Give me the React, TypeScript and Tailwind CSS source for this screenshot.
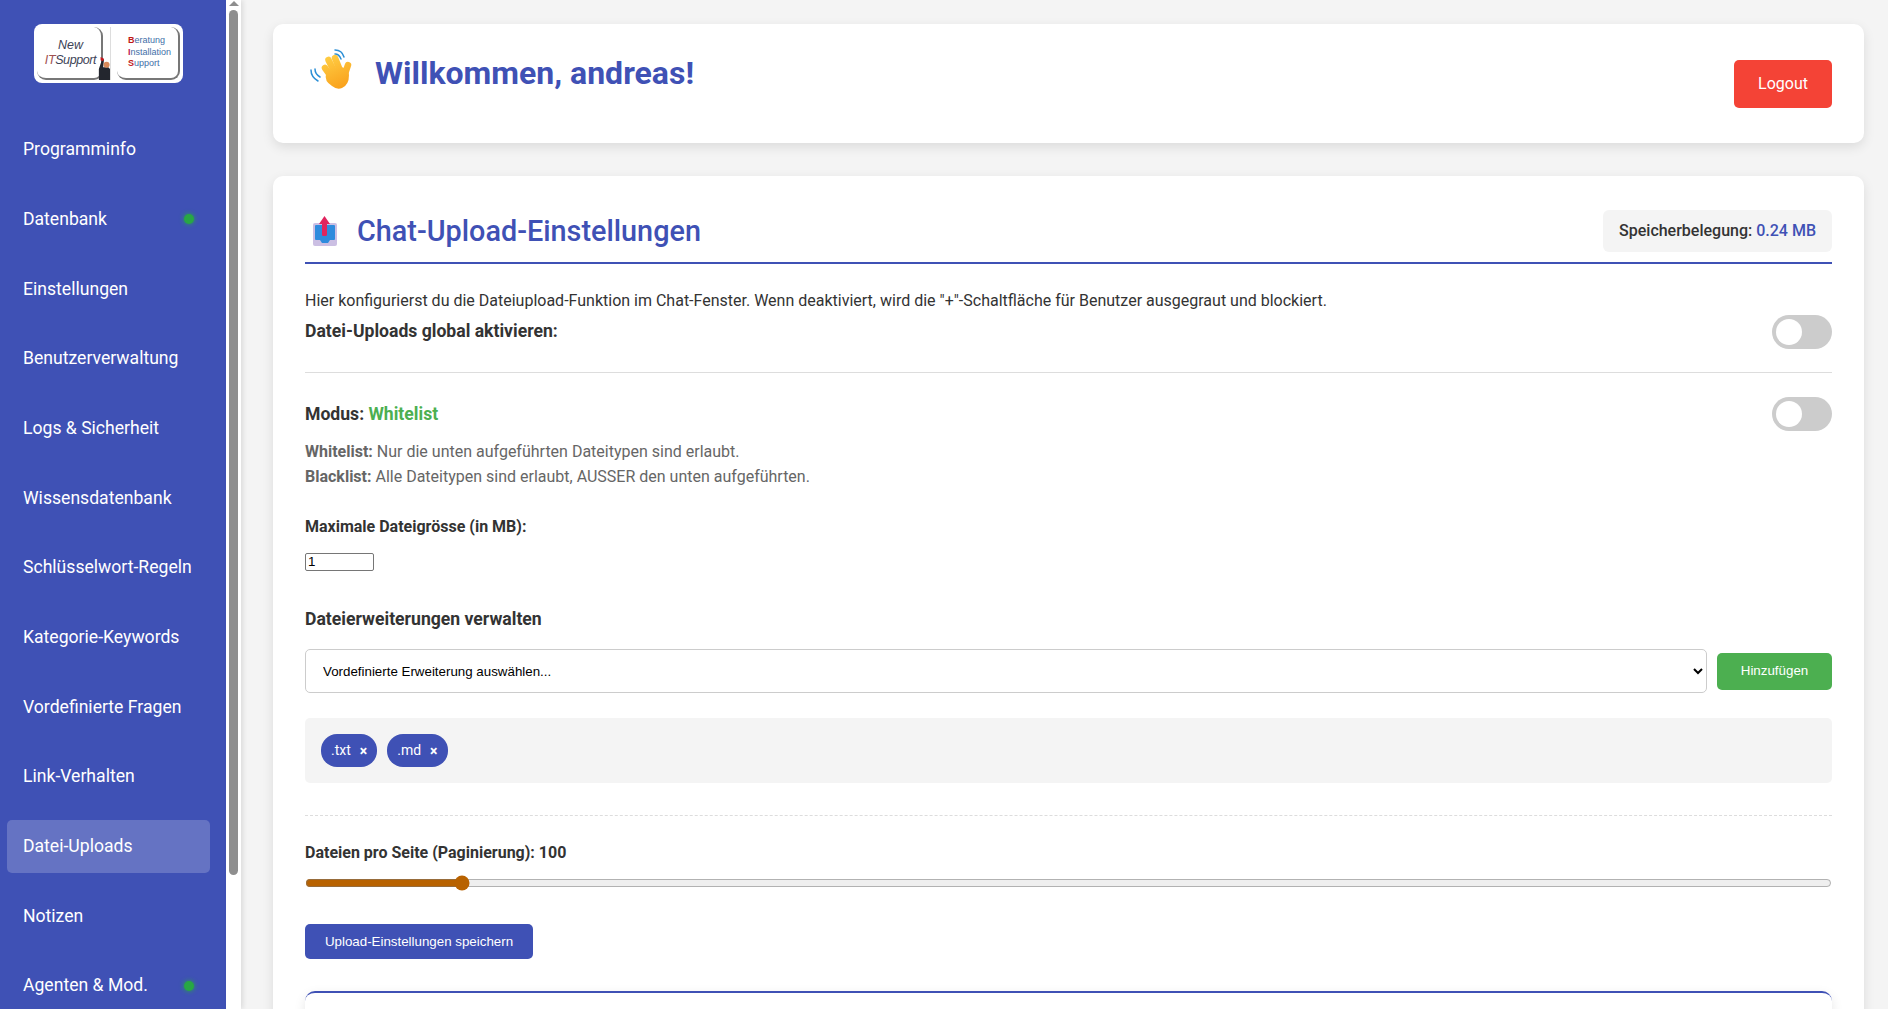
import React from 'react';

const menu = [
  { label: 'Programminfo' },
  { label: 'Datenbank', dot: true },
  { label: 'Einstellungen' },
  { label: 'Benutzerverwaltung' },
  { label: 'Logs & Sicherheit' },
  { label: 'Wissensdatenbank' },
  { label: 'Schlüsselwort-Regeln' },
  { label: 'Kategorie-Keywords' },
  { label: 'Vordefinierte Fragen' },
  { label: 'Link-Verhalten' },
  { label: 'Datei-Uploads', active: true },
  { label: 'Notizen' },
  { label: 'Agenten & Mod.', dot: true },
];

const Logo = () => (
  <div className="flex h-[59px] w-[149px] items-stretch overflow-hidden rounded-[8px] bg-white p-[3px] ml-[27px] font-['Liberation_Sans',sans-serif]">
    <div className="flex w-[66px] shrink-0 flex-col items-center justify-center rounded-[9px] border-r-2 border-b-2 border-[#777] pl-[3px] text-[12.5px] italic leading-[15px] text-[#3d4356]">
      <span>New</span>
      <span className="tracking-[-0.4px]">
        <span className="text-[#a05050]">IT</span>Support
      </span>
    </div>
    <svg viewBox="0 0 14 27" className="relative -ml-[5px] mt-[27px] h-[29px] w-[12px] shrink-0">
      <path d="M1 27 L1 14 L5 2 L7 3 L6 12 L12 12 L14 14 L14 27 Z" fill="#23262e" />
      <circle cx="10" cy="9" r="3.5" fill="#d98a5a" />
      <path d="M3 0 L7 2 L6 5 L3 4 Z" fill="#c6161c" />
    </svg>
    <div className="flex flex-1 border-l border-[#ddd] pl-[6px]">
      <div className="flex flex-1 flex-col justify-center rounded-[9px] border-r-2 border-b-2 border-[#777] pl-[11px] text-[9px] leading-[11.5px] text-[#3f6fa8]">
        <span><span className="font-bold text-[#c01818]">B</span>eratung</span>
        <span><span className="font-bold text-[#c01850]">I</span>nstallation</span>
        <span><span className="font-bold text-[#c01818]">S</span>upport</span>
      </div>
    </div>
  </div>
);

const WaveIcon = () => (
  <svg viewBox="11 12 52 52" className="h-[52px] w-[52px] shrink-0">
    <defs>
      <linearGradient id="hand" gradientUnits="userSpaceOnUse" x1="32" y1="20" x2="48" y2="54">
        <stop offset="0" stopColor="#ffcf45" />
        <stop offset="1" stopColor="#f9a01b" />
      </linearGradient>
    </defs>
    <g fill="none" stroke="#2b8fd6" strokeWidth="1.5" strokeLinecap="round">
      <path d="M41 15 Q48 15 50 22" />
      <path d="M41 19 Q45 19 47 24" />
      <path d="M17 35 Q17 42 24 46" />
      <path d="M21 34 Q21 39 26 42" />
    </g>
    <g stroke="url(#hand)" strokeLinecap="round" fill="none">
      <path d="M31 33 L39 44" strokeWidth="6.5" />
      <path d="M34.5 25 L42 40" strokeWidth="6.5" />
      <path d="M41 23 L47 38" strokeWidth="6.5" />
      <path d="M54 30 L50 42" strokeWidth="6.5" />
    </g>
    <path d="M32 39 Q30 46 38 51 Q43 55 48 53 Q55 50 55 40 Q54 32 45 32 Q36 32 32 39 Z" fill="url(#hand)" />
  </svg>
);

const UploadIcon = () => (
  <svg viewBox="8 5 40 40" className="ml-[2px] h-[40px] w-[40px] shrink-0">
    <path d="M14 19 Q14 17 16 17 L36 17 Q38 17 38 19 L38 38 Q38 40 36 40 L16 40 Q14 40 14 38 Z" fill="#cbbfe3" />
    <rect x="16" y="19" width="20" height="15" rx="1" fill="#2e8bdd" />
    <path d="M21 34 L31 34 L29 37 L23 37 Z" fill="#2e8bdd" />
    <rect x="23" y="16" width="5" height="14" rx="1.5" fill="#e0245e" />
    <path d="M25.5 10 L31 18 L20 18 Z" fill="#e0245e" />
  </svg>
);

const Toggle = () => (
  <div className="flex h-[34px] w-[60px] shrink-0 items-center rounded-full bg-[#ccc] px-[4px]">
    <div className="h-[26px] w-[26px] rounded-full bg-white" />
  </div>
);

const Tag = ({ label }: { label: string }) => (
  <span className="flex h-[33px] items-center gap-[9px] rounded-[16px] bg-[#3f51b5] pl-[10px] pr-[10px] text-[14px] text-white">
    {label}
    <span className="text-[14px] font-bold leading-none">×</span>
  </span>
);

export default function App() {
  return (
    <div className="flex h-[1009px] overflow-hidden bg-[#f4f4f4] font-['Roboto',sans-serif] text-[#333]">
      <aside className="h-full w-[226px] shrink-0 overflow-hidden bg-[#3f51b5] pl-[7px] pr-[16px] pt-[24px]">
        <Logo />
        <nav className="mt-[40px] flex flex-col gap-[17px]">
          {menu.map((item) => (
            <a
              key={item.label}
              className={
                item.active
                  ? 'flex h-[52.7px] shrink-0 items-center justify-between rounded-[5px] bg-[#6573c3] pl-[16px] pr-[16px] text-[17.6px] text-white'
                  : 'flex h-[52.7px] shrink-0 items-center justify-between rounded-[5px] pl-[16px] pr-[16px] text-[17.6px] text-white'
              }
            >
              {item.label}
              {item.dot && <span className="h-[10px] w-[10px] rounded-full bg-[#28a745] shadow-[0_0_5px_#28a745]" />}
            </a>
          ))}
        </nav>
      </aside>

      <div className="relative flex h-full w-[15px] shrink-0 flex-col items-center bg-white shadow-[2px_0_5px_rgba(0,0,0,0.1)]">
        <div className="mt-[1px] h-0 w-0 border-x-[5px] border-b-[5px] border-x-transparent border-b-[#8e8e8e]" />
        <div className="mt-[4px] h-[865px] w-[9px] rounded-full bg-[#8e8e8e]" />
      </div>

      <main className="min-w-0 flex-1 pl-[32px] pr-[24px] pt-[24px]">
        <header className="flex h-[119px] items-center justify-between rounded-[10px] bg-white px-[32px] shadow-[0_4px_12px_rgba(0,0,0,0.1)]">
          <h1 className="mb-[22px] flex items-center gap-[18px] text-[32px] font-bold text-[#3f51b5]">
            <WaveIcon />
            Willkommen, andreas!
          </h1>
          <button className="h-[48px] w-[98px] rounded-[5px] bg-[#f44336] text-[16px] text-white">Logout</button>
        </header>

        <section className="mt-[33px] rounded-[10px] bg-white px-[32px] pt-[34px] shadow-[0_4px_12px_rgba(0,0,0,0.1)]">
          <div className="flex items-center justify-between border-b-2 border-[#3f51b5] pb-[10px]">
            <h2 className="flex items-center gap-[10px] text-[28.8px] font-medium leading-[34px] text-[#3f51b5]">
              <UploadIcon />
              Chat-Upload-Einstellungen
            </h2>
            <div className="flex h-[42px] items-center rounded-[6px] bg-[#f4f4f4] px-[16px] text-[16px] font-medium">
              Speicherbelegung:&nbsp;<span className="text-[#3f51b5]">0.24 MB</span>
            </div>
          </div>

          <p className="mt-[27px] text-[16px] leading-[20px]">
            Hier konfigurierst du die Dateiupload-Funktion im Chat-Fenster. Wenn deaktiviert, wird die "+"-Schaltfläche für Benutzer ausgegraut und blockiert.
          </p>

          <div className="mt-[4px] flex items-start justify-between border-b border-[#ddd] pb-[23px]">
            <strong className="mt-[3px] text-[17.6px] font-bold">Datei-Uploads global aktivieren:</strong>
            <Toggle />
          </div>

          <div className="mt-[24px] flex items-center justify-between">
            <strong className="text-[17.6px] font-bold">
              Modus: <span className="text-[#4caf50]">Whitelist</span>
            </strong>
            <Toggle />
          </div>

          <div className="mt-[8px] text-[16px] leading-[25px] text-[#666]">
            <p><b className="font-bold">Whitelist:</b> Nur die unten aufgeführten Dateitypen sind erlaubt.</p>
            <p><b className="font-bold">Blacklist:</b> Alle Dateitypen sind erlaubt, AUSSER den unten aufgeführten.</p>
          </div>

          <label className="mt-[28px] block text-[16px] font-bold leading-[20px]">Maximale Dateigrösse (in MB):</label>
          <input
            type="number"
            defaultValue={1}
            className="mt-[16px] block h-[18px] w-[69px] rounded-[2px] border border-[#767676] bg-white px-[2px] font-['Liberation_Sans',sans-serif] text-[13.33px] text-black"
          />

          <h3 className="mt-[37px] text-[17.6px] font-bold leading-[22px]">Dateierweiterungen verwalten</h3>

          <div className="mt-[19px] flex items-center gap-[10px]">
            <select
              defaultValue=""
              className="h-[44px] flex-1 rounded-[5px] border border-[#ccc] bg-white pl-[13px] font-['Liberation_Sans',sans-serif] text-[13.33px] text-black"
            >
              <option value="">Vordefinierte Erweiterung auswählen...</option>
            </select>
            <button className="h-[37px] w-[115px] rounded-[5px] bg-[#4caf50] font-['Liberation_Sans',sans-serif] text-[13.33px] text-white">
              Hinzufügen
            </button>
          </div>

          <div className="mt-[25px] flex h-[65px] items-center gap-[10px] rounded-[5px] bg-[#f4f4f4] px-[16px]">
            <Tag label=".txt" />
            <Tag label=".md" />
          </div>

          <div className="mt-[32px] border-t border-dashed border-[#ddd]" />

          <label className="mt-[27px] block text-[16px] font-bold leading-[20px]">Dateien pro Seite (Paginierung): 100</label>
          <input
            type="range"
            min={0}
            max={1013}
            defaultValue={100}
            className="mt-[12px] block h-[16px] w-full accent-[#b86200]"
          />

          <button className="mt-[33px] block h-[35px] w-[228px] rounded-[5px] bg-[#3f51b5] font-['Liberation_Sans',sans-serif] text-[13.33px] text-white">
            Upload-Einstellungen speichern
          </button>

          <div className="mt-[32px] h-[40px] rounded-t-[10px] border-t-2 border-[#3f51b5] shadow-[0_4px_12px_rgba(0,0,0,0.1)]" />
        </section>
      </main>
    </div>
  );
}
